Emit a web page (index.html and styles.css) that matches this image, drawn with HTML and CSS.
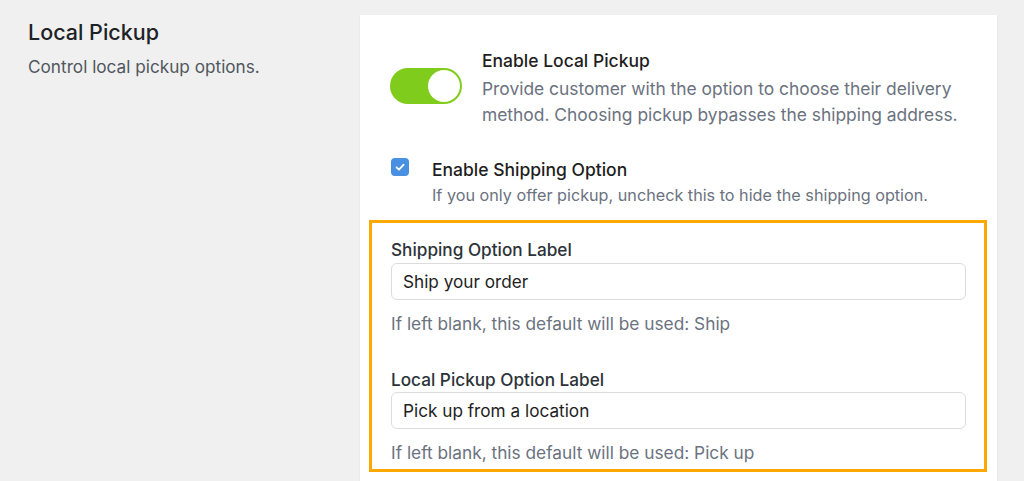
FILE: index.html
```html
<!DOCTYPE html>
<html lang="en">

<head>
  <title>Local Pickup</title>
  <link rel="stylesheet" href="styles.css">
</head>

<body>

  <div class="settings">
    <div class="intro">
      <h2>Local Pickup</h2>
      <p>Control local pickup options.</p>
    </div>

    <div class="card">
      <div class="toggle-row">
        <span class="toggle"><span class="knob"></span></span>
        <div class="text">
          <div class="title">Enable Local Pickup</div>
          <div class="desc">Provide customer with the option to choose their delivery method. Choosing pickup bypasses the shipping address.</div>
        </div>
      </div>

      <div class="check-row">
        <span class="checkbox">
          <svg width="12" height="12" viewBox="0 0 12 12">
            <path d="M2.5 6.3 L5 8.6 L9.6 3.6" fill="none" stroke="white" stroke-width="1.8" stroke-linecap="round" stroke-linejoin="round"/>
          </svg>
        </span>
        <div class="text">
          <div class="title">Enable Shipping Option</div>
          <div class="desc small">If you only offer pickup, uncheck this to hide the shipping option.</div>
        </div>
      </div>

      <div class="highlight">
        <div class="field">
          <label>Shipping Option Label</label>
          <input type="text" value="Ship your order">
          <div class="help">If left blank, this default will be used: Ship</div>
        </div>
        <div class="field">
          <label>Local Pickup Option Label</label>
          <input type="text" value="Pick up from a location">
          <div class="help">If left blank, this default will be used: Pick up</div>
        </div>
      </div>
    </div>
  </div>

</body>

</html>
```

FILE: styles.css
```css
body {
  margin: 0;
  background-color: #f0f0f0;
  font-family: Inter, "Noto Sans", sans-serif;
  color: #1e1e1e;
}

.settings {
  display: flex;
  padding-top: 15px;
  height: 466px;
  overflow: hidden;
}

.intro {
  width: 360px;
  flex-shrink: 0;
  padding-left: 28px;
  box-sizing: border-box;
}

.intro h2 {
  margin: 4px 0 0;
  font-size: 21.5px;
  line-height: 26px;
  font-weight: 500;
  color: #1d2327;
}

.intro p {
  margin: 10px 0 0;
  font-size: 17.2px;
  line-height: 24px;
  color: #50575e;
}

.card {
  width: 637px;
  flex-shrink: 0;
  background: white;
  box-shadow: 0 1px 2px rgba(0, 0, 0, 0.08);
  padding: 34px 30px 0 0;
  box-sizing: border-box;
}

.toggle-row {
  display: flex;
  padding-left: 30px;
  gap: 20px;
}

.toggle {
  width: 72px;
  height: 36px;
  border-radius: 18px;
  background: #80cc1c;
  margin-top: 19px;
  flex-shrink: 0;
  display: flex;
  align-items: center;
  justify-content: flex-end;
  padding-right: 2px;
  box-sizing: border-box;
}

.knob {
  width: 32px;
  height: 32px;
  border-radius: 50%;
  background: white;
}

.title {
  font-size: 17.5px;
  font-weight: 500;
  color: #1e1e1e;
  line-height: 24px;
}

.desc {
  font-size: 17.4px;
  color: #6b7280;
  line-height: 26px;
  margin-top: 3px;
}

.desc.small {
  font-size: 16.2px;
  margin-top: 2px;
  line-height: 22px;
}

.check-row {
  display: flex;
  gap: 23px;
  padding-left: 31px;
  margin-top: 30px;
}

.checkbox {
  width: 18px;
  height: 18px;
  border-radius: 4px;
  background: #4a90e2;
  flex-shrink: 0;
  display: flex;
  align-items: center;
  justify-content: center;
}

.highlight {
  margin: 14px -20px 0 9px;
  border: 3px solid #ffa800;
  padding: 16px 18px 5px 19px;
}

.field {
  margin-bottom: 34px;
}

.field:last-child {
  margin-bottom: 0;
}

.field label {
  display: block;
  font-size: 17.2px;
  font-weight: 500;
  color: #2c3338;
  line-height: 22px;
}

.field input {
  display: block;
  width: 100%;
  box-sizing: border-box;
  height: 37px;
  margin-top: 2px;
  padding: 0 11px;
  border: 1px solid #dcdcde;
  border-radius: 6px;
  font-family: inherit;
  font-size: 17.2px;
  color: #1e1e1e;
}

.field:last-child input {
  margin-top: 1px;
}

.help {
  margin-top: 13px;
  font-size: 17.3px;
  color: #6b7280;
  line-height: 22px;
}
```
